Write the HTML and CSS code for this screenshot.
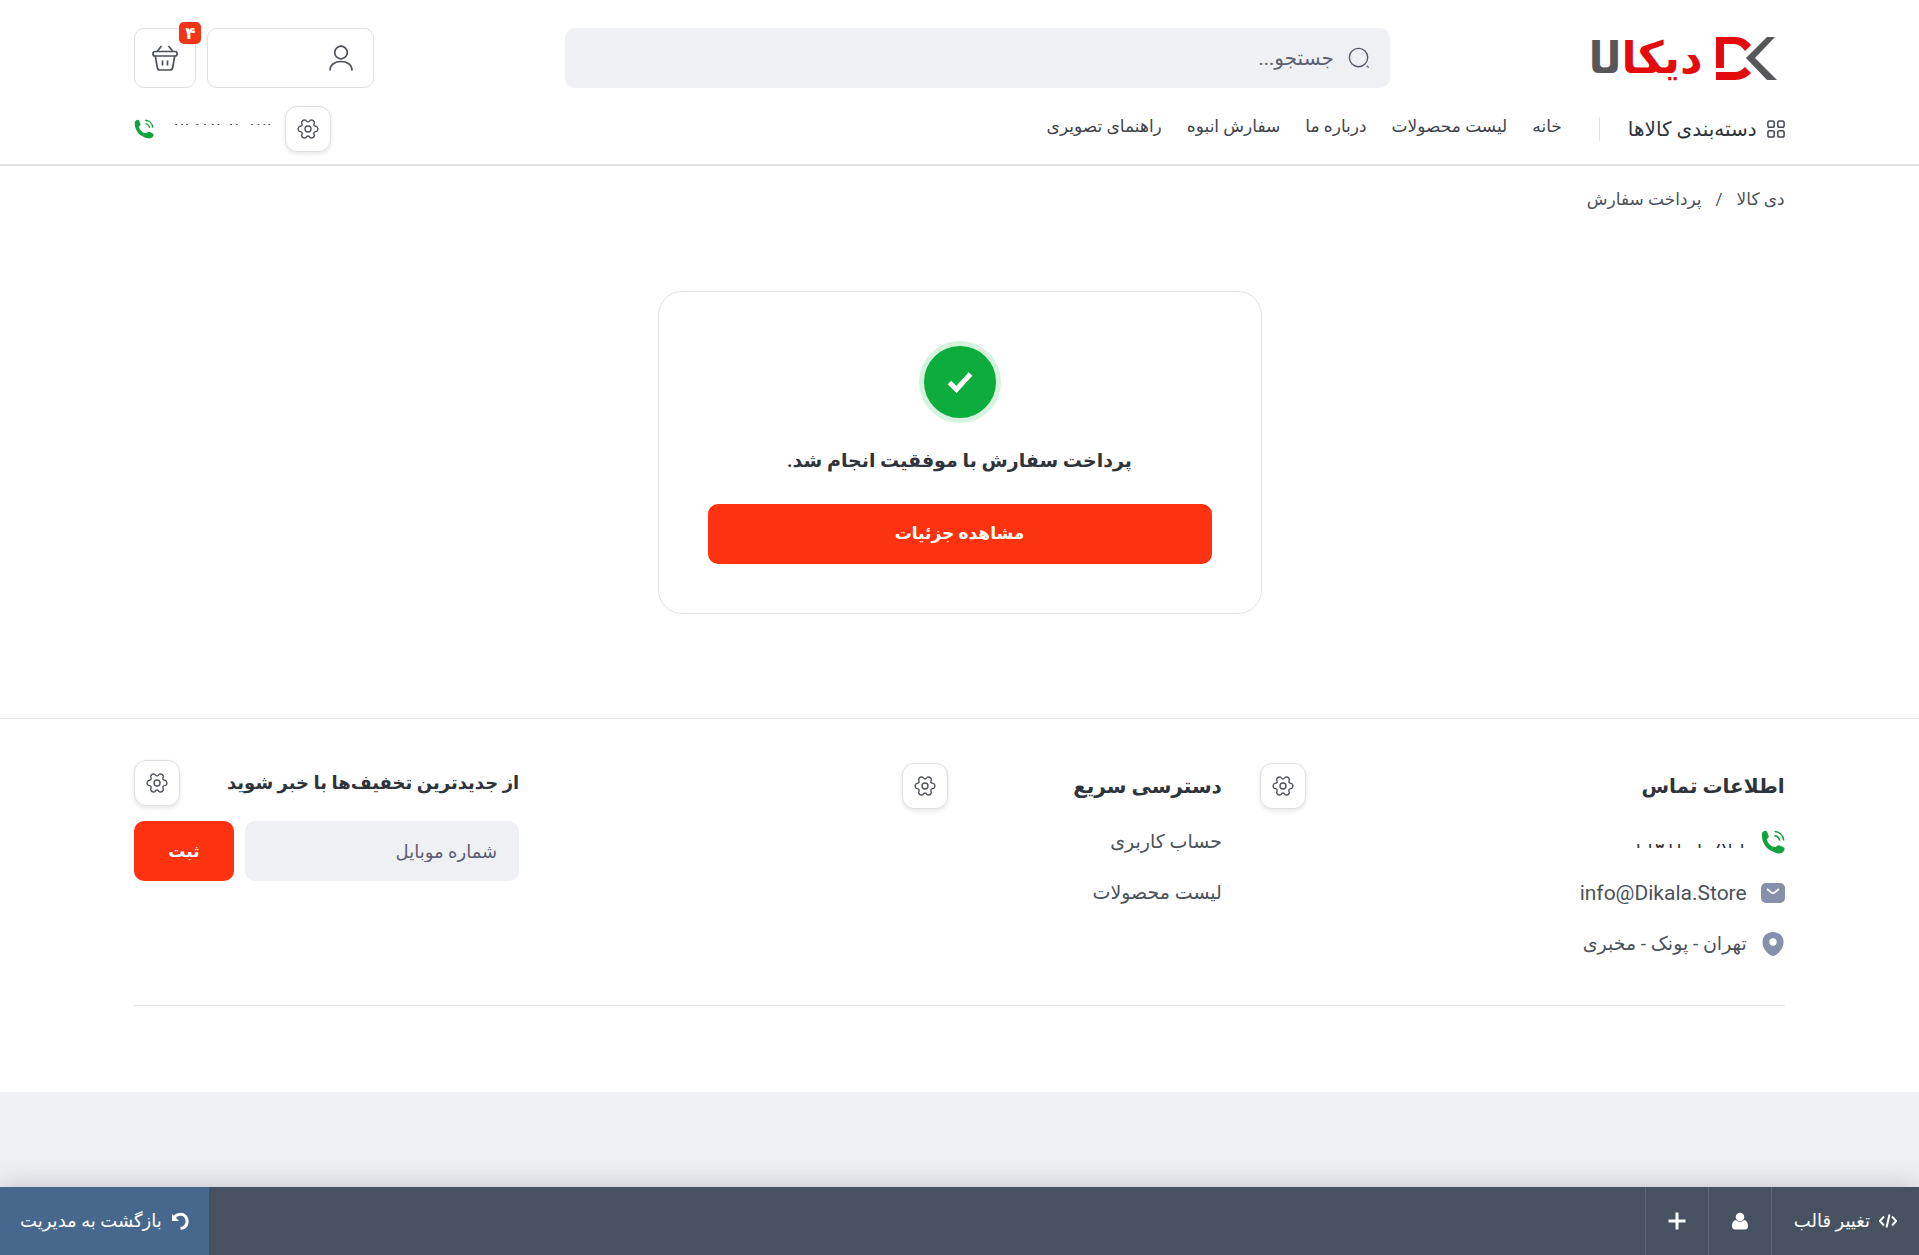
FILE: index.html
```
<!DOCTYPE html>
<html lang="fa" dir="rtl">
  <head>
    <meta charset="UTF-8" />
    <meta name="viewport" content="width=device-width, initial-scale=1.0" />
    <title>دی کالا - پرداخت سفارش</title>
    <link rel="stylesheet" href="styles.css">
  </head>
  <body>
    <!-- shared icons -->
    <svg class="icon-sprite" aria-hidden="true">
      <symbol id="icon-gear" viewBox="0 0 24 24">
        <path d="M21.6 9.400Q24 12 21.600 14.600Q16.900 14.900 19.100 19.100Q18 22.400 14.600 21.700Q12 17.700 9.400 21.700Q6 22.400 4.900 19.100Q7.100 14.900 2.400 14.600Q0 12 2.400 9.400Q7.100 9.100 4.900 4.900Q6 1.600 9.400 2.300Q12 6.300 14.600 2.300Q18 1.600 19.100 4.900Q16.900 9.100 21.600 9.400Z" />
        <circle cx="12" cy="12" r="3.3" />
      </symbol>
      <symbol id="icon-phone" viewBox="0 0 24 24">
        <path d="M1 3.2C2.6.8 5 .1 6 1.600l1.700 4.300c.5 1.200-.9 2.300-2 3.500 1 3.300 3.600 6.200 6.500 7.600l-2.200 3.800C4.300 17.700.2 11 1 3.200Z" />
        <path d="M11.3 21.300c3.900 2.400 8.700 3.100 11.200.1 1.500-1.800 1.500-3-.1-4.100l-3.600-1.900c-1.800-.9-3.100.9-4.500 1.800l-2-.7-2.600 3.900Z" />
        <path class="wave" d="M13.5 1.500c4.800.2 8.500 3.800 9.200 9M13.500 5.600c2.600.3 4.600 2.300 5.200 5" />
      </symbol>
    </svg>

    <header class="site-header">
      <div class="container">
        <div class="header-top">
          <a href="#" class="logo" aria-label="دی کالا">
            <svg class="logo-mark" viewBox="0 0 62 46" aria-hidden="true">
              <path class="logo-red" d="M1 2h19c7 0 12 3 16 8l-6 6c-3-4-6-7-11-7H9v24H1Z" />
              <path class="logo-red" d="M1 37h18c5 0 8-2 11-5l6 6c-4 4-9 7-16 7H1Z" />
              <path class="logo-gray" d="M52 2h8L40 23l22 22h-10L31 23Z" />
            </svg>
            <span class="logo-text"><span class="logo-red">دیکا</span><span class="logo-gray">ل&zwj;ا</span></span>
          </a>

          <form class="search">
            <svg viewBox="0 0 24 24" aria-hidden="true">
              <circle cx="11.5" cy="11.5" r="10" />
              <path d="m20.5 20.5 2 2" />
            </svg>
            <input type="text" placeholder="جستجو..." aria-label="جستجو" />
          </form>

          <div class="header-actions">
            <a href="#" class="action-box account" aria-label="حساب کاربری">
              <svg viewBox="0 0 26 26" aria-hidden="true">
                <circle cx="13" cy="7.500" r="6.300" />
                <path d="M2 25.500c0-6 5-9 11-9s11 3 11 9" />
              </svg>
            </a>
            <a href="#" class="action-box basket" aria-label="سبد خرید">
              <svg viewBox="0 0 26 26" aria-hidden="true">
                <rect x="1" y="6.500" width="24" height="4.500" rx="2" />
                <path d="m9.500 1-4 5M16.500 1l4 5M3.300 11l2 11.500c.3 1.500 1 2.500 2.700 2.500h10c1.700 0 2.400-1 2.700-2.500l2-11.500M10.500 15.500v5M15.500 15.500v5" />
              </svg>
              <span class="badge">۴</span>
            </a>
          </div>
        </div>

        <div class="header-bottom">
          <a href="#" class="category-link">
            <svg viewBox="0 0 20 20" aria-hidden="true">
              <rect x="1" y="1" width="7" height="7" rx="2" />
              <rect x="12" y="1" width="7" height="7" rx="2" />
              <rect x="1" y="12" width="7" height="7" rx="2" />
              <rect x="12" y="12" width="7" height="7" rx="2" />
            </svg>
            دسته‌بندی کالاها
          </a>
          <nav class="main-nav">
            <a href="#">خانه</a>
            <a href="#">لیست محصولات</a>
            <a href="#">درباره ما</a>
            <a href="#">سفارش انبوه</a>
            <a href="#">راهنمای تصویری</a>
          </nav>
          <div class="header-contact">
            <button type="button" class="settings-btn" aria-label="تنظیمات"><svg><use href="#icon-gear" /></svg></button>
            <a href="#" class="header-phone">
              <span class="masked masked-top">۰۲۱۵۱۲۰۲۰۸۲۱</span>
              <svg class="phone-icon" aria-hidden="true"><use href="#icon-phone" /></svg>
            </a>
          </div>
        </div>
      </div>
    </header>

    <main>
      <div class="container">
        <nav class="breadcrumb" aria-label="مسیر">
          <a href="#">دی کالا</a>
          <span>/</span>
          <span>پرداخت سفارش</span>
        </nav>

        <section class="result-card">
          <div class="result-icon">
            <svg viewBox="0 0 26 22" aria-hidden="true"><path d="m2.500 11.500 7 7L23.500 3" /></svg>
          </div>
          <h1>پرداخت سفارش با موفقیت انجام شد.</h1>
          <a href="#" class="btn">مشاهده جزئیات</a>
        </section>
      </div>
    </main>

    <footer class="site-footer">
      <div class="container">
        <div class="footer-columns">
          <section class="footer-contact">
            <div class="footer-head">
              <h2>اطلاعات تماس</h2>
              <button type="button" class="settings-btn" aria-label="تنظیمات"><svg><use href="#icon-gear" /></svg></button>
            </div>
            <ul>
              <li>
                <svg class="phone-icon" aria-hidden="true"><use href="#icon-phone" /></svg>
                <span class="masked masked-bottom">۰۲۱۵۱۲۰۲۰۸۲۱</span>
              </li>
              <li>
                <svg viewBox="0 0 24 24" aria-hidden="true">
                  <rect x="0" y="2" width="24" height="20" rx="5" />
                  <path class="cut-line" d="m6 8 4.500 3.600c1 .8 2 .8 3 0L18 8" />
                </svg>
                <a href="#">info@Dikala.Store</a>
              </li>
              <li>
                <svg viewBox="0 0 24 24" aria-hidden="true">
                  <path d="M12 0c6 0 10.500 4.300 10.500 10 0 6-4.200 10.800-8 13.200-1.600 1-3.400 1-5 0C5.700 20.800 1.500 16 1.500 10 1.500 4.300 6 0 12 0Z" />
                  <circle class="cut" cx="12" cy="10" r="3.700" />
                </svg>
                <span>تهران - پونک - مخبری</span>
              </li>
            </ul>
          </section>

          <section class="footer-links">
            <div class="footer-head">
              <h2>دسترسی سریع</h2>
              <button type="button" class="settings-btn" aria-label="تنظیمات"><svg><use href="#icon-gear" /></svg></button>
            </div>
            <ul>
              <li><a href="#">حساب کاربری</a></li>
              <li><a href="#">لیست محصولات</a></li>
            </ul>
          </section>

          <section class="footer-newsletter">
            <div class="newsletter-head">
              <h3>از جدیدترین تخفیف‌ها با خبر شوید</h3>
              <button type="button" class="settings-btn" aria-label="تنظیمات"><svg><use href="#icon-gear" /></svg></button>
            </div>
            <form class="newsletter-form">
              <input type="tel" dir="rtl" placeholder="شماره موبایل" aria-label="شماره موبایل" />
              <button type="submit" class="btn">ثبت</button>
            </form>
          </section>
        </div>
      </div>
    </footer>

    <div class="admin-bar">
      <a href="#" class="admin-item">
        <svg class="line-icon" viewBox="0 0 18 18" aria-hidden="true"><path d="M5 4.500.8 9 5 13.500M13 4.500 17.200 9 13 13.500M10.500 2.500l-3 13" /></svg>
        تغییر قالب
      </a>
      <a href="#" class="admin-item" aria-label="کاربر">
        <svg viewBox="0 0 18 18" aria-hidden="true"><circle cx="9" cy="5" r="4.300" /><path d="M5 8c2 2.400 6 2.400 8 0 3 .6 4 3.400 4 6 0 2-1 3.500-3 3.500H4c-2 0-3-1.500-3-3.500 0-2.600 1-5.400 4-6Z" /></svg>
      </a>
      <a href="#" class="admin-item" aria-label="افزودن">
        <svg class="line-icon plus" viewBox="0 0 18 18" aria-hidden="true"><path d="M9 .5v17M.5 9h17" /></svg>
      </a>
      <a href="#" class="admin-item admin-back">
        <svg class="line-icon undo" viewBox="0 0 18 18" aria-hidden="true"><path d="M3 6c2-4 8-5 11-2s3 9-1 11.500c-1 .6-2 .8-3.500.8" /><path class="arrow-head" d="M1 2v7h7Z" /></svg>
        بازگشت به مدیریت
      </a>
    </div>
  </body>
</html>
```
FILE: styles.css
```
:root {
  --primary: #fd3210;
  --green: #0cad3c;
  --dark: #2f343b;
  --text: #4c525a;
  --field: #eff0f4;
  --border: #e0e0e6;
}

* {
  box-sizing: border-box;
}

body {
  margin: 0;
  min-height: 100vh;
  display: flex;
  flex-direction: column;
  background: var(--field);
  color: var(--text);
  font-family: Roboto, "DejaVu Sans", sans-serif;
  font-size: 17px;
  line-height: 24px;
}

a {
  color: inherit;
  text-decoration: none;
}

h1,
h2,
h3,
ul {
  margin: 0;
  padding: 0;
}

ul {
  list-style: none;
}

input,
button {
  font: inherit;
  border: 0;
}

.icon-sprite {
  display: none;
}

.container {
  width: 86%;
  margin: 0 auto;
}

/* header */
.site-header {
  background: #fff;
  border-bottom: 2px solid var(--border);
  padding: 28px 0 12px;
}

.header-top {
  display: grid;
  grid-template-columns: 395fr 825fr 431fr;
  align-items: center;
}

.logo {
  display: flex;
  align-items: center;
  gap: 12px;
  padding-right: 8px;
}

.logo-mark {
  width: 62px;
  height: 46px;
}

.logo-text {
  font-family: "DejaVu Sans", sans-serif;
  font-size: 44px;
  font-weight: 700;
  line-height: 60px;
}

.logo-red {
  color: #e30b0e;
  fill: #e30b0e;
}

.logo-gray {
  color: #575759;
  fill: #575759;
}

.search {
  display: flex;
  align-items: center;
  gap: 12px;
  height: 60px;
  padding: 0 20px;
  background: var(--field);
  border-radius: 10px;
}

.search svg {
  width: 22px;
  height: 22px;
  fill: none;
  stroke: #555a6a;
  stroke-width: 1.5;
}

.search input {
  flex: 1;
  height: 40px;
  background: none;
  font-size: 20px;
}

input::placeholder {
  color: #5c6070;
  opacity: 1;
}

.header-actions {
  display: flex;
  justify-content: flex-end;
  gap: 11px;
}

.action-box {
  position: relative;
  display: flex;
  align-items: center;
  height: 60px;
  padding: 0 17px;
  border: 1px solid var(--border);
  border-radius: 10px;
}

.action-box svg {
  width: 26px;
  height: 26px;
  fill: none;
  stroke: #4d515c;
  stroke-width: 1.7;
}

.account {
  width: 167px;
  padding: 0 19px;
}

.badge {
  position: absolute;
  top: -7px;
  right: -6px;
  width: 22px;
  height: 22px;
  border-radius: 5px;
  background: #f23518;
  color: #fff;
  font-size: 17px;
  font-weight: 700;
  line-height: 22px;
  text-align: center;
}

.header-bottom {
  display: flex;
  align-items: center;
  margin-top: 18px;
}

.category-link {
  display: flex;
  align-items: center;
  gap: 10px;
  padding-left: 28px;
  border-left: 1px solid var(--border);
  color: var(--dark);
  font-size: 20px;
}

.category-link svg {
  width: 18px;
  height: 18px;
  fill: none;
  stroke: #444952;
  stroke-width: 1.7;
}

.main-nav {
  display: flex;
  gap: 25px;
  padding: 0 37px 6px;
  color: #3f434a;
}

.header-contact {
  display: flex;
  align-items: center;
  gap: 10px;
  margin-right: auto;
}

.header-phone {
  display: flex;
  align-items: center;
  gap: 11px;
}

.settings-btn {
  display: flex;
  align-items: center;
  justify-content: center;
  width: 46px;
  height: 46px;
  padding: 0;
  background: #fff;
  border: 1px solid #dfe0e3;
  border-radius: 12px;
  box-shadow: 0 2px 5px rgba(0, 0, 0, 0.1);
}

.settings-btn svg {
  width: 22px;
  height: 22px;
  fill: none;
  stroke: #4f545b;
  stroke-width: 1.5;
  stroke-linejoin: round;
}

.phone-icon {
  width: 20px;
  height: 20px;
  fill: #12a23c;
}

.wave {
  fill: none;
  stroke: #12a23c;
  stroke-width: 1.6;
}

/* only a strip of the number stays readable */
.masked {
  position: relative;
  color: var(--dark);
}

.masked::after {
  content: "";
  position: absolute;
  background: #fff;
}

.masked-top::after {
  inset: 8px 0 0 2px;
}

.masked-bottom::after {
  inset: 0 0 10px 0;
}

/* page */
main {
  background: #fff;
}

main .container {
  display: flow-root;
}

.breadcrumb {
  display: flex;
  gap: 14px;
  padding-top: 21px;
}

.result-card {
  width: 604px;
  max-width: 100%;
  margin: 80px auto 104px;
  padding: 49px;
  border: 1px solid #e1e4e6;
  border-radius: 24px;
  text-align: center;
}

.result-icon {
  display: flex;
  align-items: center;
  justify-content: center;
  width: 82px;
  height: 82px;
  margin: 0 auto 20px;
  background: var(--green);
  border: 5px solid #d5f3de;
  border-radius: 50%;
}

.result-icon svg {
  width: 26px;
  height: 22px;
  fill: none;
  stroke: #fff;
  stroke-width: 5;
}

.result-card h1 {
  margin-bottom: 25px;
  color: var(--dark);
  font-size: 19px;
  line-height: 36px;
}

.btn {
  display: block;
  height: 60px;
  padding: 0 34px;
  background: var(--primary);
  border-radius: 10px;
  color: #fff;
  font-size: 17px;
  font-weight: 700;
  line-height: 58px;
  text-align: center;
}

/* footer */
.site-footer {
  padding: 41px 0 86px;
  background: #fff;
  border-top: 1px solid var(--border);
}

.footer-columns {
  display: grid;
  grid-template-columns: 525fr 358fr 383fr 385fr;
  padding-bottom: 46px;
  border-bottom: 1px solid var(--border);
}

.footer-links {
  padding-right: 38px;
}

.footer-newsletter {
  grid-column: 4;
}

.footer-head,
.newsletter-head {
  display: flex;
  align-items: center;
  justify-content: space-between;
}

.footer-head {
  padding-top: 3px;
}

.footer-head h2 {
  color: var(--dark);
  font-size: 20px;
}

.newsletter-head h3 {
  color: var(--dark);
  font-size: 18px;
}

.site-footer ul {
  display: flex;
  flex-direction: column;
  gap: 21px;
  padding-top: 18px;
  font-size: 19px;
}

.site-footer li {
  display: flex;
  align-items: center;
  gap: 14px;
  height: 30px;
}

.site-footer li svg {
  width: 24px;
  height: 24px;
  fill: #8790aa;
}

.site-footer li .phone-icon {
  fill: #12a23c;
}

.footer-contact a {
  font-size: 21px;
}

.site-footer .cut {
  fill: #fff;
}

.site-footer .cut-line {
  fill: none;
  stroke: #fff;
  stroke-width: 1.8;
}

.newsletter-form {
  display: flex;
  gap: 11px;
  margin-top: 15px;
}

.newsletter-form input {
  flex: 1;
  min-width: 0;
  height: 60px;
  padding: 0 22px;
  background: var(--field);
  border-radius: 10px;
  font-size: 18px;
}

/* admin bar */
.admin-bar {
  position: sticky;
  bottom: 0;
  display: flex;
  height: 68px;
  margin-top: auto;
  background: #475160;
  box-shadow: 0 0 28px rgba(40, 50, 60, 0.25);
  color: #fff;
  font-size: 18px;
}

.admin-item {
  display: flex;
  align-items: center;
  gap: 9px;
  padding: 0 22px;
  border-left: 1px solid #5b6779;
}

.admin-item svg {
  width: 18px;
  height: 18px;
  fill: #fff;
}

.admin-item .line-icon {
  fill: none;
  stroke: #fff;
  stroke-width: 2;
}

.admin-item .undo,
.admin-item .plus {
  stroke-width: 3;
}

.admin-item .arrow-head {
  fill: #fff;
  stroke: none;
}

.admin-back {
  margin-right: auto;
  padding: 0 20px;
  border-left: 0;
  background: #48678d;
}
```
